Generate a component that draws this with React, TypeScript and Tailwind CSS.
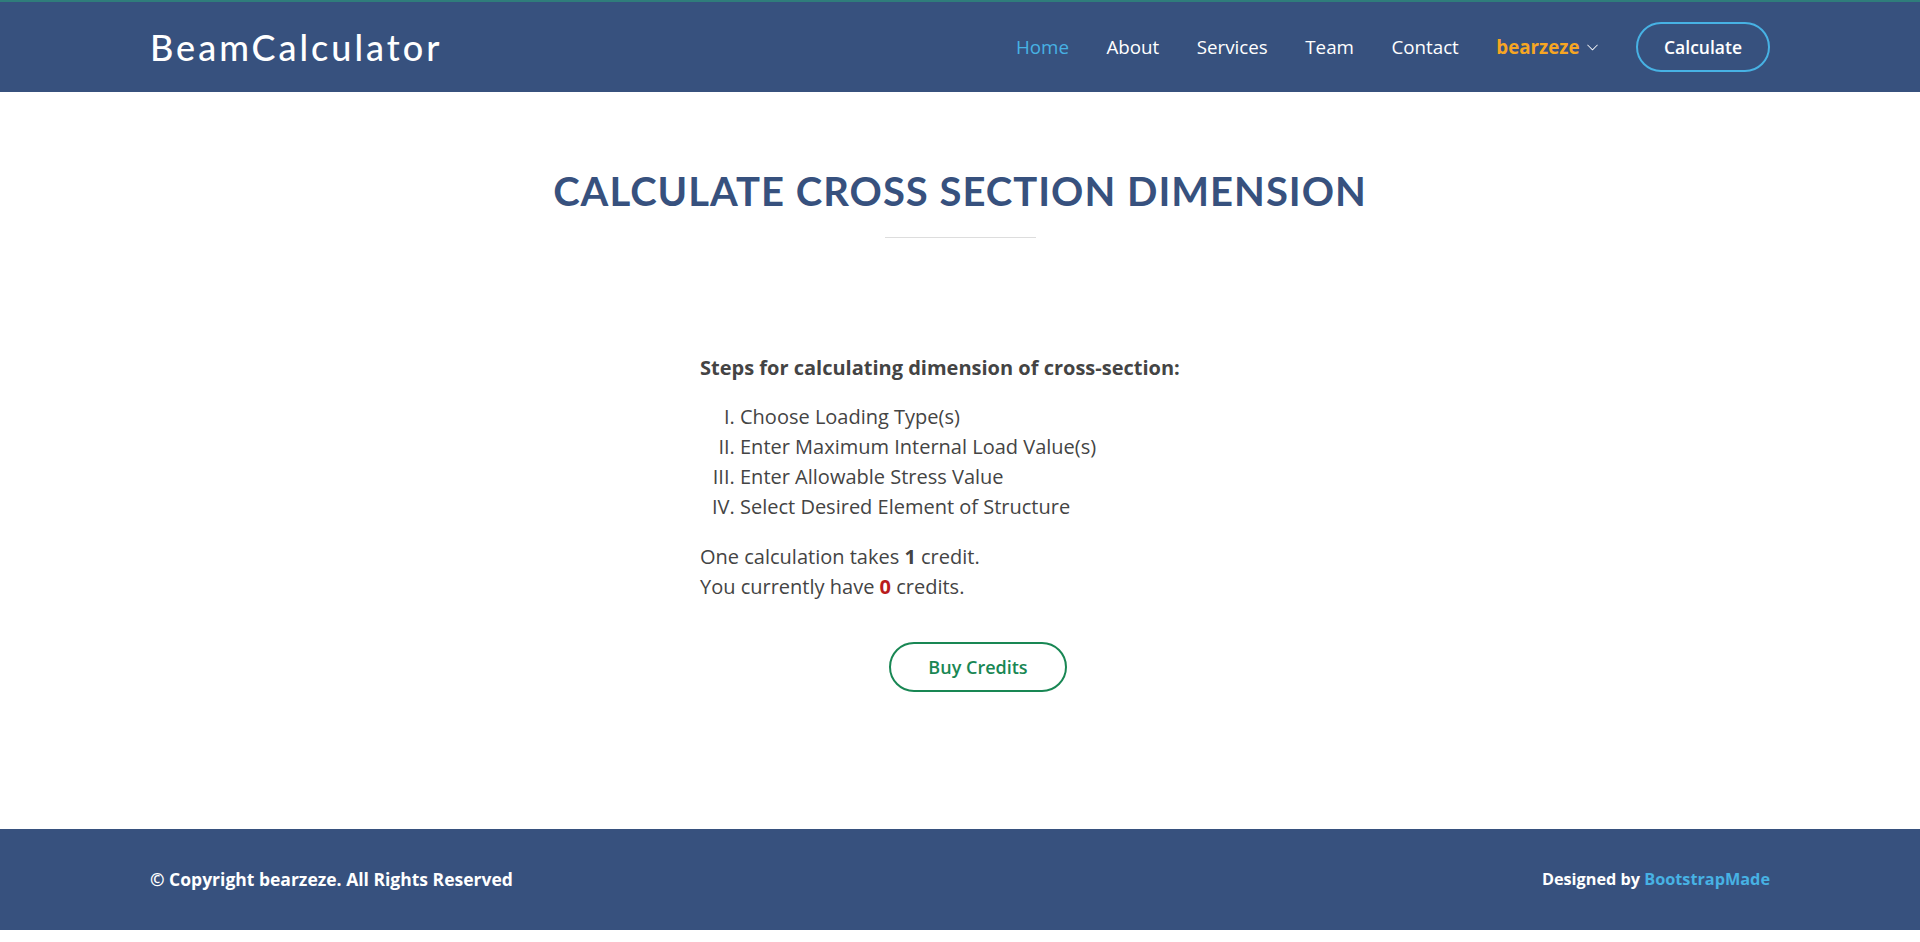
import React from "react";

const navLinks = ["Home", "About", "Services", "Team", "Contact"];

const steps = [
  "Choose Loading Type(s)",
  "Enter Maximum Internal Load Value(s)",
  "Enter Allowable Stress Value",
  "Select Desired Element of Structure",
];

const ChevronDown = () => (
  <svg viewBox="0 0 16 16" width="13" height="13" fill="currentColor" className="ml-[6px]">
    <path d="M1.646 4.646a.5.5 0 0 1 .708 0L8 10.293l5.646-5.647a.5.5 0 0 1 .708.708l-6 6a.5.5 0 0 1-.708 0l-6-6a.5.5 0 0 1 0-.708z" />
  </svg>
);

const App: React.FC = () => {
  return (
    <div className="min-h-screen bg-white font-['Open_Sans',sans-serif] text-[#444444]">
      {/* header */}
      <header className="h-[92px] border-t-2 border-[#2f7d7b] bg-[#37517e]">
        <div className="mx-auto flex h-full w-[1650px] items-center justify-between px-[15px]">
          <a href="#" className="font-['Lato',sans-serif] text-[36px] font-medium leading-none tracking-[3px] text-white">
            BeamCalculator
          </a>
          <nav className="flex items-center">
            {navLinks.map((link, i) => (
              <a
                key={link}
                href="#"
                className={`text-[18.75px] ${i === 0 ? "text-[#47b2e4]" : "text-white"} ${i === 0 ? "" : "pl-[37.5px]"}`}
              >
                {link}
              </a>
            ))}
            <a href="#" className="flex items-center pl-[37.5px] text-[18.75px] font-bold text-[#f6a623]">
              bearzeze
              <span className="text-white">
                <ChevronDown />
              </span>
            </a>
            <a
              href="#"
              className="ml-[37.5px] rounded-full border-2 border-[#47b2e4] px-[26px] py-[10px] text-[17.5px] font-semibold leading-[26px] text-white"
            >
              Calculate
            </a>
          </nav>
        </div>
      </header>

      {/* main */}
      <main className="pt-[75px]">
        <h2 className="text-center font-['Lato',sans-serif] text-[40px] font-bold uppercase leading-[48px] tracking-[1px] text-[#37517e]">
          Calculate Cross Section Dimension
        </h2>
        <div className="mx-auto mt-[22px] h-px w-[151px] bg-[#dddddd]" />

        <div className="mx-auto mt-[115px] w-[1650px] px-[15px]">
          <div className="ml-[550px] w-[556px] text-[20px] leading-[30px]">
            <p className="mb-[19px] font-bold">Steps for calculating dimension of cross-section:</p>
            <ol className="mb-[20px] list-[upper-roman] pl-[40px]">
              {steps.map((s) => (
                <li key={s}>{s}</li>
              ))}
            </ol>
            <p>
              One calculation takes <b>1</b> credit.
              <br />
              You currently have <b className="text-[#b91c1c]">0</b> credits.
            </p>
            <div className="mt-[40px] flex justify-center">
              <button className="h-[50px] w-[178px] rounded-full border-2 border-[#198754] text-[18px] font-semibold text-[#198754]">
                Buy Credits
              </button>
            </div>
          </div>
        </div>
      </main>

      {/* footer */}
      <footer className="mt-[137px] h-[101px] bg-[#37517e] text-white">
        <div className="mx-auto flex h-full w-[1650px] items-center justify-between px-[15px] font-bold">
          <div className="text-[17.5px]">© Copyright bearzeze. All Rights Reserved</div>
          <div className="text-[16.25px]">
            Designed by <a href="#" className="text-[#47b2e4]">BootstrapMade</a>
          </div>
        </div>
      </footer>
    </div>
  );
};

export default App;
